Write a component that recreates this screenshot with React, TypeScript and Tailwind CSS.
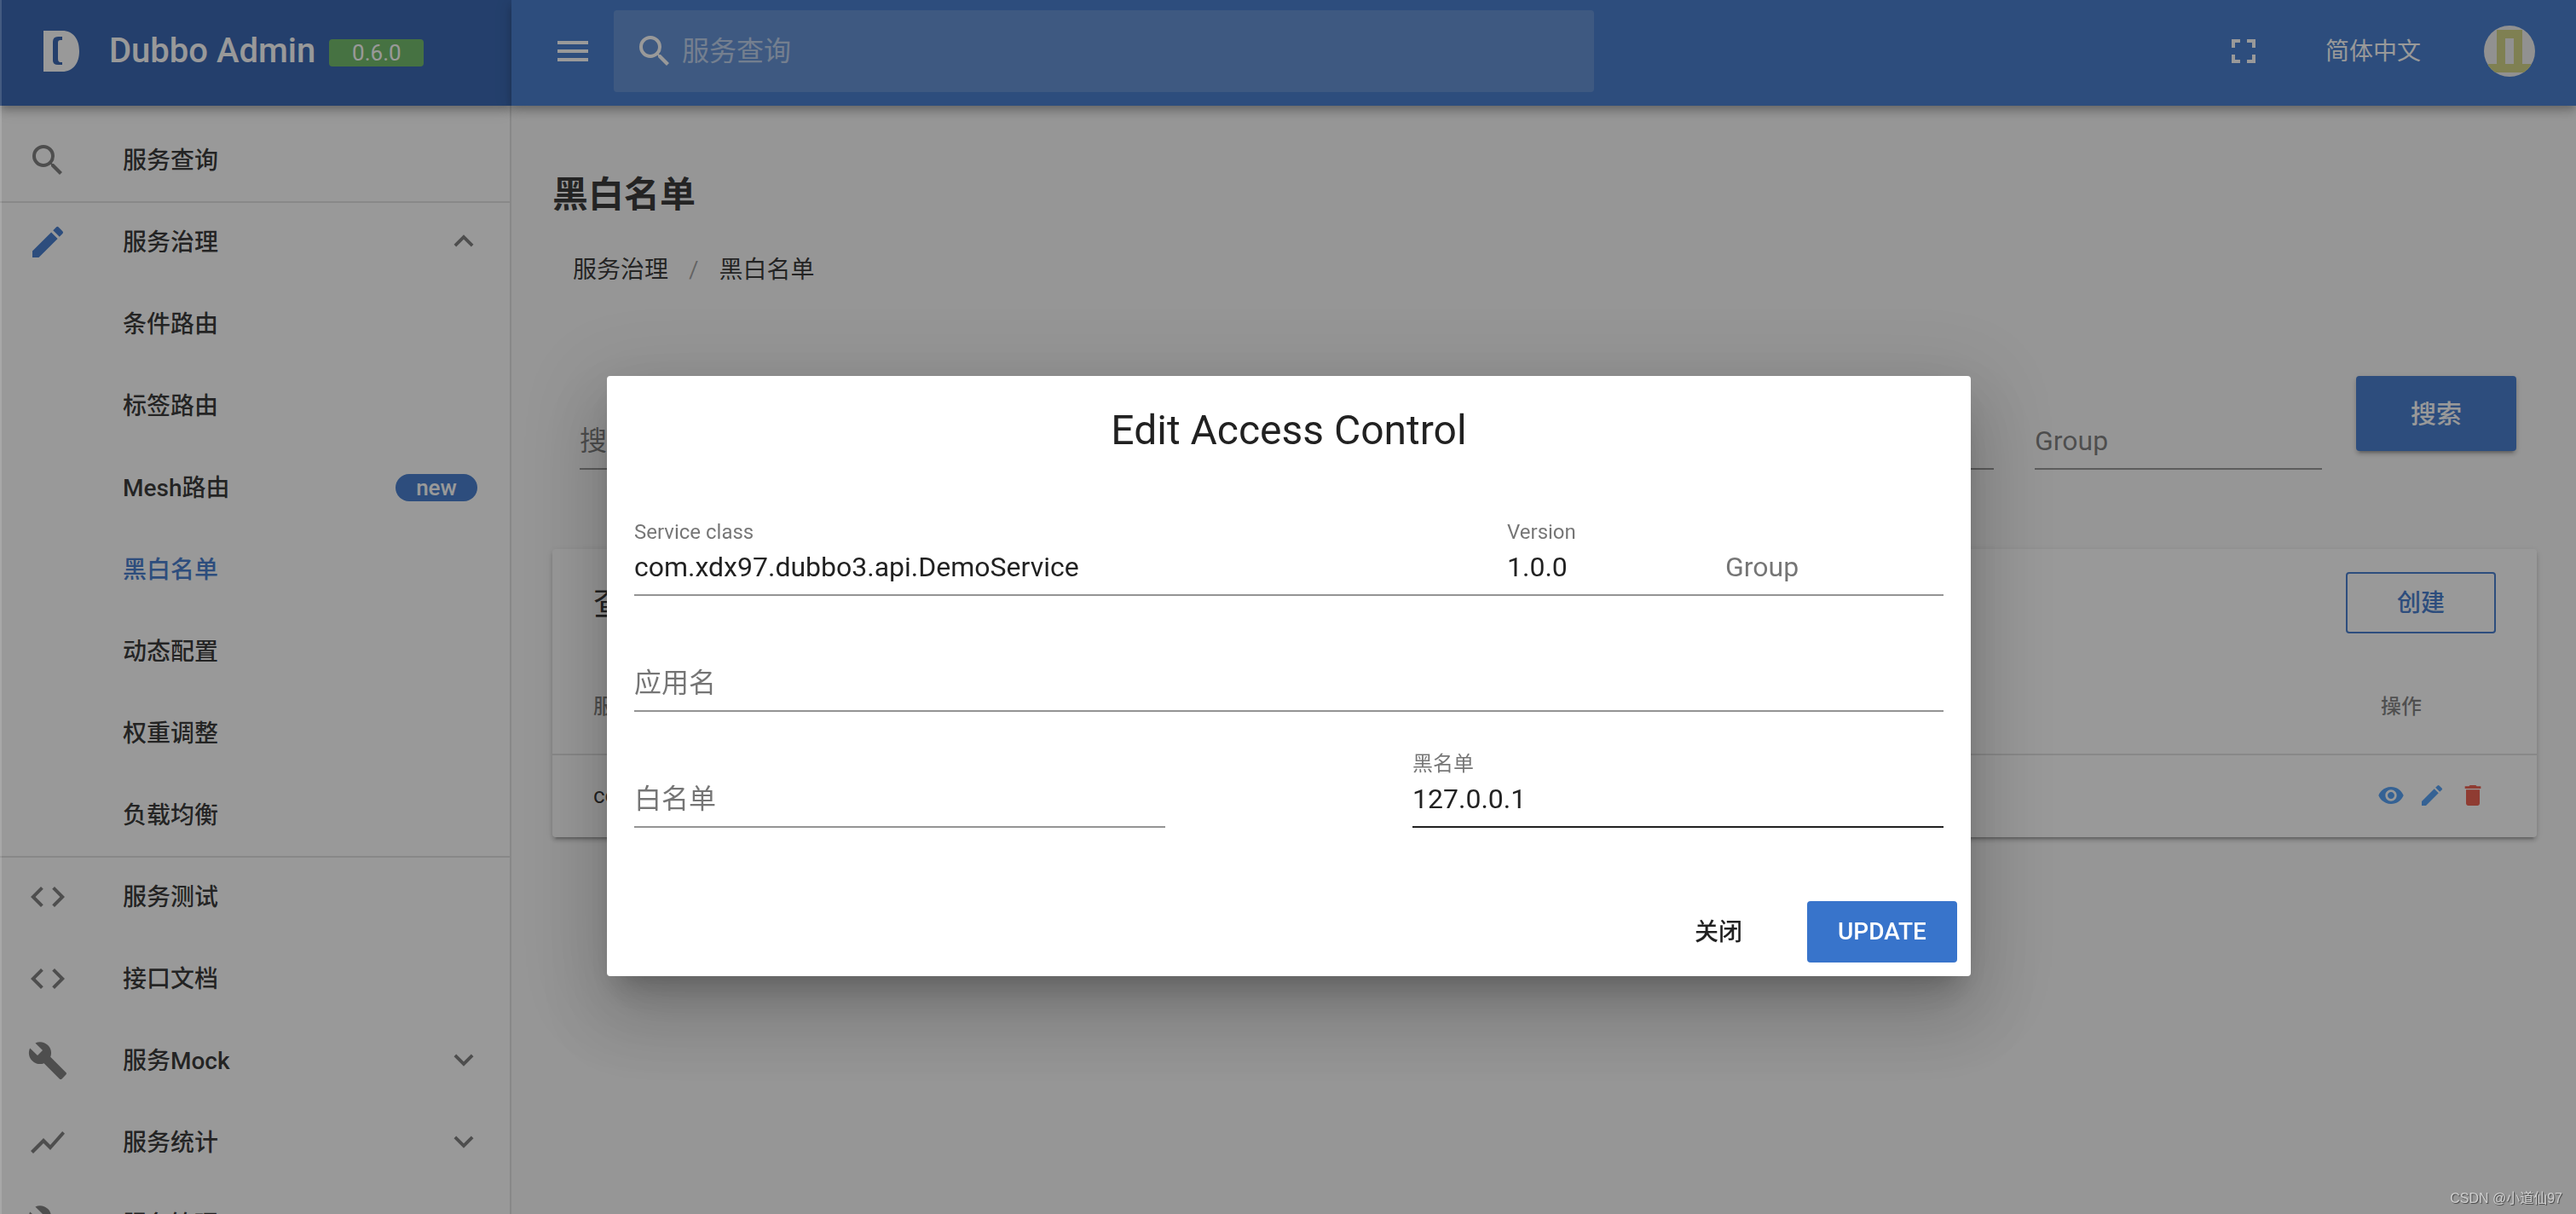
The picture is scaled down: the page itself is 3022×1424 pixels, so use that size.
import React from "react";
import {
  MdBuild,
  MdCode,
  MdDelete,
  MdEdit,
  MdFullscreen,
  MdKeyboardArrowDown,
  MdKeyboardArrowUp,
  MdMenu,
  MdSearch,
  MdShowChart,
  MdVisibility,
} from "react-icons/md";
import type { IconType } from "react-icons";

type NavItem = {
  label: string;
  icon?: IconType;
  iconClass?: string;
  arrow?: "up" | "down";
  badge?: string;
  active?: boolean;
  divider?: boolean;
};

const navItems: NavItem[] = [
  { label: "服务查询", icon: MdSearch },
  { label: "服务治理", icon: MdEdit, iconClass: "text-[#3874cb]", arrow: "up", divider: true },
  { label: "条件路由" },
  { label: "标签路由" },
  { label: "Mesh路由", badge: "new" },
  { label: "黑白名单", active: true },
  { label: "动态配置" },
  { label: "权重调整" },
  { label: "负载均衡" },
  { label: "服务测试", icon: MdCode, divider: true },
  { label: "接口文档", icon: MdCode },
  { label: "服务Mock", icon: MdBuild, arrow: "down" },
  { label: "服务统计", icon: MdShowChart, arrow: "down" },
  { label: "服务管理", icon: MdBuild, arrow: "down" },
];

const toolbarShadow =
  "shadow-[0_4px_8px_-2px_rgba(0,0,0,0.2),0_8px_10px_0_rgba(0,0,0,0.14),0_2px_20px_0_rgba(0,0,0,0.12)]";
const raisedShadow =
  "shadow-[0_6px_2px_-4px_rgba(0,0,0,0.2),0_4px_4px_0_rgba(0,0,0,0.14),0_2px_10px_0_rgba(0,0,0,0.12)]";

function Logo() {
  return (
    <svg viewBox="0 0 42 48" className="h-12 w-[42px] shrink-0 fill-white" aria-hidden="true">
      <path
        fillRule="evenodd"
        d="M0 0H22C35 0 42 10 42 24S35 48 22 48H0ZM22 7H17Q11 7 11 13V35Q11 40 17 40H22V37H20Q17 37 17 33V14Q17 11 20 11H22Z"
      />
    </svg>
  );
}

function Avatar() {
  return (
    <svg viewBox="0 0 60 60" className="size-[60px] rounded-full bg-[#f0f0f0]" aria-hidden="true">
      <path fill="#cfd17c" fillRule="evenodd" d="M15 5H45V45H55V55H5V45H15ZM25 15V45H35V15Z" />
    </svg>
  );
}

function Sidebar() {
  return (
    <aside className="flex w-[600px] shrink-0 flex-col border-r-2 border-black/12 bg-white">
      <div className={"relative -mr-0.5 flex h-[124px] shrink-0 items-center bg-[#275aac] pb-1 pl-[51px] text-white " + toolbarShadow}>
        <Logo />
        <span className="ml-[35px] text-[40px] leading-[56px] font-medium">Dubbo Admin</span>
        <span className="mt-1 ml-4 flex h-8 w-[111px] items-center justify-center rounded bg-[#67b75e] text-[26px] leading-8">
          0.6.0
        </span>
      </div>
      <nav className="flex flex-col pt-4">
        {navItems.map((item) => {
          const Icon = item.icon;
          return (
            <a
              key={item.label}
              href="#"
              className={
                "flex h-24 shrink-0 items-center px-8 text-[28px] leading-10 font-medium " +
                (item.divider ? "shadow-[inset_0_2px_0_rgba(0,0,0,0.12)] " : "") +
                (item.active ? "text-[#3874cb]" : "text-black/87")
              }
            >
              <span className="w-28 shrink-0">
                {Icon && <Icon className={"size-12 " + (item.iconClass ?? "text-black/54")} />}
              </span>
              <span className="flex-1 pt-0.5">{item.label}</span>
              {item.badge && (
                <span className="mr-1.5 flex h-8 w-24 items-center justify-center rounded-full bg-[#3874cb] text-[26px] leading-8 text-white">
                  {item.badge}
                </span>
              )}
              {item.arrow === "up" && <MdKeyboardArrowUp className="-mr-0.5 size-12 pb-0.5 text-black/54" />}
              {item.arrow === "down" && <MdKeyboardArrowDown className="-mr-0.5 size-12 pb-0.5 text-black/54" />}
            </a>
          );
        })}
      </nav>
    </aside>
  );
}

function TopBar() {
  return (
    <header className={"relative z-10 flex h-[124px] shrink-0 items-center bg-[#3874cb] px-12 pb-1 text-white " + toolbarShadow}>
      <button type="button" aria-label="菜单">
        <MdMenu className="size-12" />
      </button>
      <label className="ml-6 flex h-24 w-[1150px] min-w-0 items-center gap-2 rounded bg-white/16 px-6">
        <MdSearch className="size-12 shrink-0" />
        <input
          type="text"
          aria-label="服务查询"
          placeholder="服务查询"
          className="min-w-0 flex-1 bg-transparent text-[32px] leading-10 outline-none placeholder:text-white/60"
        />
      </label>
      <div className="ml-auto flex items-center">
        <button type="button" aria-label="全屏">
          <MdFullscreen className="size-12" />
        </button>
        <button type="button" className="mr-[74px] ml-18 pt-0.5 text-[28px] leading-10">
          简体中文
        </button>
        <button type="button" aria-label="用户">
          <Avatar />
        </button>
      </div>
    </header>
  );
}

function SearchForm() {
  const field =
    "h-[68px] min-w-0 border-b-2 border-black/42 bg-transparent pt-0.5 text-[32px] leading-10 outline-none placeholder:text-black/54";
  return (
    <form className="mt-[106px] flex h-[110px] items-end pr-6 pl-8">
      <input type="text" aria-label="搜索" placeholder="搜索Dubbo服务" className={field + " flex-1"} />
      <input type="text" aria-label="Group" placeholder="Group" className={field + " ml-12 w-[337px]"} />
      <button
        type="button"
        className={"ml-10 h-[88px] w-[188px] self-start rounded bg-[#3874cb] pt-0.5 text-[30px] leading-10 font-medium text-white " + raisedShadow}
      >
        搜索
      </button>
    </form>
  );
}

function ResultCard() {
  return (
    <section className={"mt-[93px] rounded bg-white " + raisedShadow}>
      <div className="flex h-32 items-center justify-between px-12">
        <h3 className="text-[40px] leading-[56px]">查询结果</h3>
        <button
          type="button"
          className="mb-0.5 h-18 w-44 rounded border-2 border-[#3874cb] pt-0.5 text-[28px] leading-10 font-medium text-[#3874cb]"
        >
          创建
        </button>
      </div>
      <table className="w-full border-separate border-spacing-0 text-left">
        <thead>
          <tr className="text-[24px] leading-8 text-black/54">
            <th className="h-[114px] border-b-2 border-black/12 pt-0.5 pl-12 font-medium">服务名</th>
            <th className="w-[235px] border-b-2 border-black/12 pt-0.5 pl-[52px] font-medium">操作</th>
          </tr>
        </thead>
        <tbody>
          <tr className="h-24 text-[26px] leading-8">
            <td className="pb-0.5 pl-12">com.xdx97.dubbo3.api.DemoService</td>
            <td className="pb-0.5 pl-12">
              <div className="flex gap-4 text-[#4799f5]">
                <button type="button" aria-label="查看">
                  <MdVisibility className="size-8" />
                </button>
                <button type="button" aria-label="编辑">
                  <MdEdit className="size-8" />
                </button>
                <button type="button" aria-label="删除" className="text-[#ed5341]">
                  <MdDelete className="size-8" />
                </button>
              </div>
            </td>
          </tr>
        </tbody>
      </table>
    </section>
  );
}

type FieldProps = {
  id: string;
  label: string;
  value?: string;
  widthClass: string;
  strong?: boolean;
};

function Field({ id, label, value, widthClass, strong }: FieldProps) {
  return (
    <div className={"relative border-b-2 pt-7 pb-1 " + (strong ? "border-black/87 " : "border-black/42 ") + widthClass}>
      <label
        htmlFor={id}
        className={
          "absolute left-0 text-black/54 " +
          (value ? "top-0 text-[24px] leading-[30px]" : "top-7 text-[32px] leading-[56px]")
        }
      >
        {label}
      </label>
      <input
        id={id}
        type="text"
        defaultValue={value}
        className="block h-14 w-full bg-transparent text-[32px] leading-10 text-black/87 outline-none"
      />
    </div>
  );
}

function EditDialog() {
  return (
    <div className="fixed inset-0 z-20 flex items-start justify-center border-l-2 border-white/15 bg-[#212121]/46 pt-[441px]">
      <div
        role="dialog"
        aria-modal="true"
        aria-labelledby="dialog-title"
        className="w-[1600px] max-w-full rounded bg-white pb-4 shadow-[0_22px_30px_-14px_rgba(0,0,0,0.2),0_48px_76px_6px_rgba(0,0,0,0.14),0_18px_92px_16px_rgba(0,0,0,0.12)]"
      >
        <h2 id="dialog-title" className="py-8 text-center text-[48px] leading-[64px]">
          Edit Access Control
        </h2>
        <form className="flex flex-col gap-[46px] px-8 pt-10">
          <div className="flex">
            <Field id="service" label="Service class" value="com.xdx97.dubbo3.api.DemoService" widthClass="w-8/12" />
            <Field id="version" label="Version" value="1.0.0" widthClass="w-2/12" />
            <Field id="group" label="Group" widthClass="w-2/12" />
          </div>
          <Field id="application" label="应用名" widthClass="w-full" />
          <div className="flex justify-between">
            <Field id="whitelist" label="白名单" widthClass="w-[623px]" />
            <Field id="blacklist" label="黑名单" value="127.0.0.1" widthClass="w-[623px]" strong />
          </div>
        </form>
        <div className="mt-[86px] flex justify-end gap-10 pr-4">
          <button type="button" className="h-18 px-9 pt-0.5 text-[28px] leading-10 font-medium">
            关闭
          </button>
          <button
            type="button"
            className="h-18 w-44 rounded bg-[#3874cb] text-[28px] leading-10 font-medium text-white"
          >
            UPDATE
          </button>
        </div>
      </div>
      <p className="absolute right-4 bottom-1.5 font-['Liberation_Sans','Noto_Sans_CJK_SC',sans-serif] text-[16px] leading-6 text-[#d0d0d0] [text-shadow:1px_1px_1px_#444]">
        CSDN @小道仙97
      </p>
    </div>
  );
}

export default function App() {
  return (
    <div className="flex h-screen overflow-hidden bg-[#fafafa] font-[Roboto,'Noto_Sans_CJK_SC',sans-serif] text-black/87">
      <Sidebar />
      <div className="flex min-w-0 flex-1 flex-col">
        <TopBar />
        <main className="flex-1 pt-[77px] pr-[46px] pl-12">
          <h1 className="text-[42px] leading-[56px] font-bold">黑白名单</h1>
          <nav aria-label="面包屑" className="mt-[42px] flex px-6 text-[28px] leading-9">
            <a href="#">服务治理</a>
            <span className="px-6 text-black/38">/</span>
            <a href="#">黑白名单</a>
          </nav>
          <SearchForm />
          <ResultCard />
        </main>
      </div>
      <EditDialog />
    </div>
  );
}
